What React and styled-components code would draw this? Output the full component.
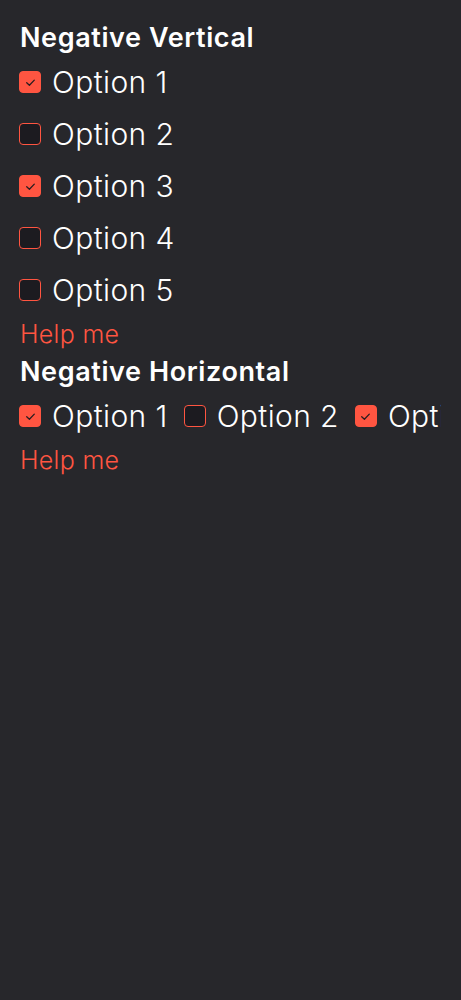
import React from "react";
import styled, { createGlobalStyle } from "styled-components";

const Global = createGlobalStyle`
  html, body {
    margin: 0;
    padding: 0;
    background: #27272b;
  }
  body {
    font-family: Inter, "Noto Sans", sans-serif;
    color: #ffffff;
  }
`;

const Page = styled.div`
  min-height: 1000px;
  padding: 20px 20px 0 19px;
  box-sizing: border-box;
  background: #27272b;
`;

const Title = styled.h2`
  margin: ${(p) => (p.spaced ? "3px" : "0")} 0 0 0;
  font-size: 27px;
  font-weight: 600;
  line-height: 36px;
  letter-spacing: 0.6px;
  padding-left: 1px;
`;

const Group = styled.div`
  display: flex;
  flex-direction: ${(p) => (p.horizontal ? "row" : "column")};
  gap: ${(p) => (p.horizontal ? "16px" : "0")};
  overflow: hidden;
  white-space: nowrap;
`;

const Item = styled.label`
  display: flex;
  align-items: center;
  gap: 11px;
  height: 52px;
  flex-shrink: 0;
  font-size: 30px;
  font-weight: 300;
  letter-spacing: 0.4px;
`;

const Box = styled.span`
  width: 22px;
  height: 22px;
  box-sizing: border-box;
  border-radius: 4px;
  display: flex;
  align-items: center;
  justify-content: center;
  flex-shrink: 0;
  background: ${(p) => (p.checked ? "#ff5541" : "#1c1b20")};
  border: 1.5px solid #ff5541;
`;

const Help = styled.div`
  color: #ff5541;
  font-size: 25px;
  font-weight: 300;
  line-height: 34px;
  letter-spacing: 0.3px;
  margin-top: 1px;
  padding-left: 1px;
`;

function Check({ checked }) {
  return (
    <Box checked={checked}>
      {checked ? (
        <svg width="13" height="13" viewBox="0 0 12 12">
          <path
            d="M2.5 6.2 L5 8.5 L9.5 3.8"
            fill="none"
            stroke="#2a1d1f"
            strokeWidth="1.2"
            strokeLinecap="round"
            strokeLinejoin="round"
          />
        </svg>
      ) : null}
    </Box>
  );
}

const options = [
  { label: "Option 1", checked: true },
  { label: "Option 2", checked: false },
  { label: "Option 3", checked: true },
  { label: "Option 4", checked: false },
  { label: "Option 5", checked: false },
];

export default function App() {
  return (
    <Page>
      <Global />
      <Title>Negative Vertical</Title>
      <Group>
        {options.map((o) => (
          <Item key={o.label}>
            <Check checked={o.checked} />
            {o.label}
          </Item>
        ))}
      </Group>
      <Help>Help me</Help>
      <Title spaced>Negative Horizontal</Title>
      <Group horizontal>
        {options.map((o) => (
          <Item key={o.label}>
            <Check checked={o.checked} />
            {o.label}
          </Item>
        ))}
      </Group>
      <Help>Help me</Help>
    </Page>
  );
}
